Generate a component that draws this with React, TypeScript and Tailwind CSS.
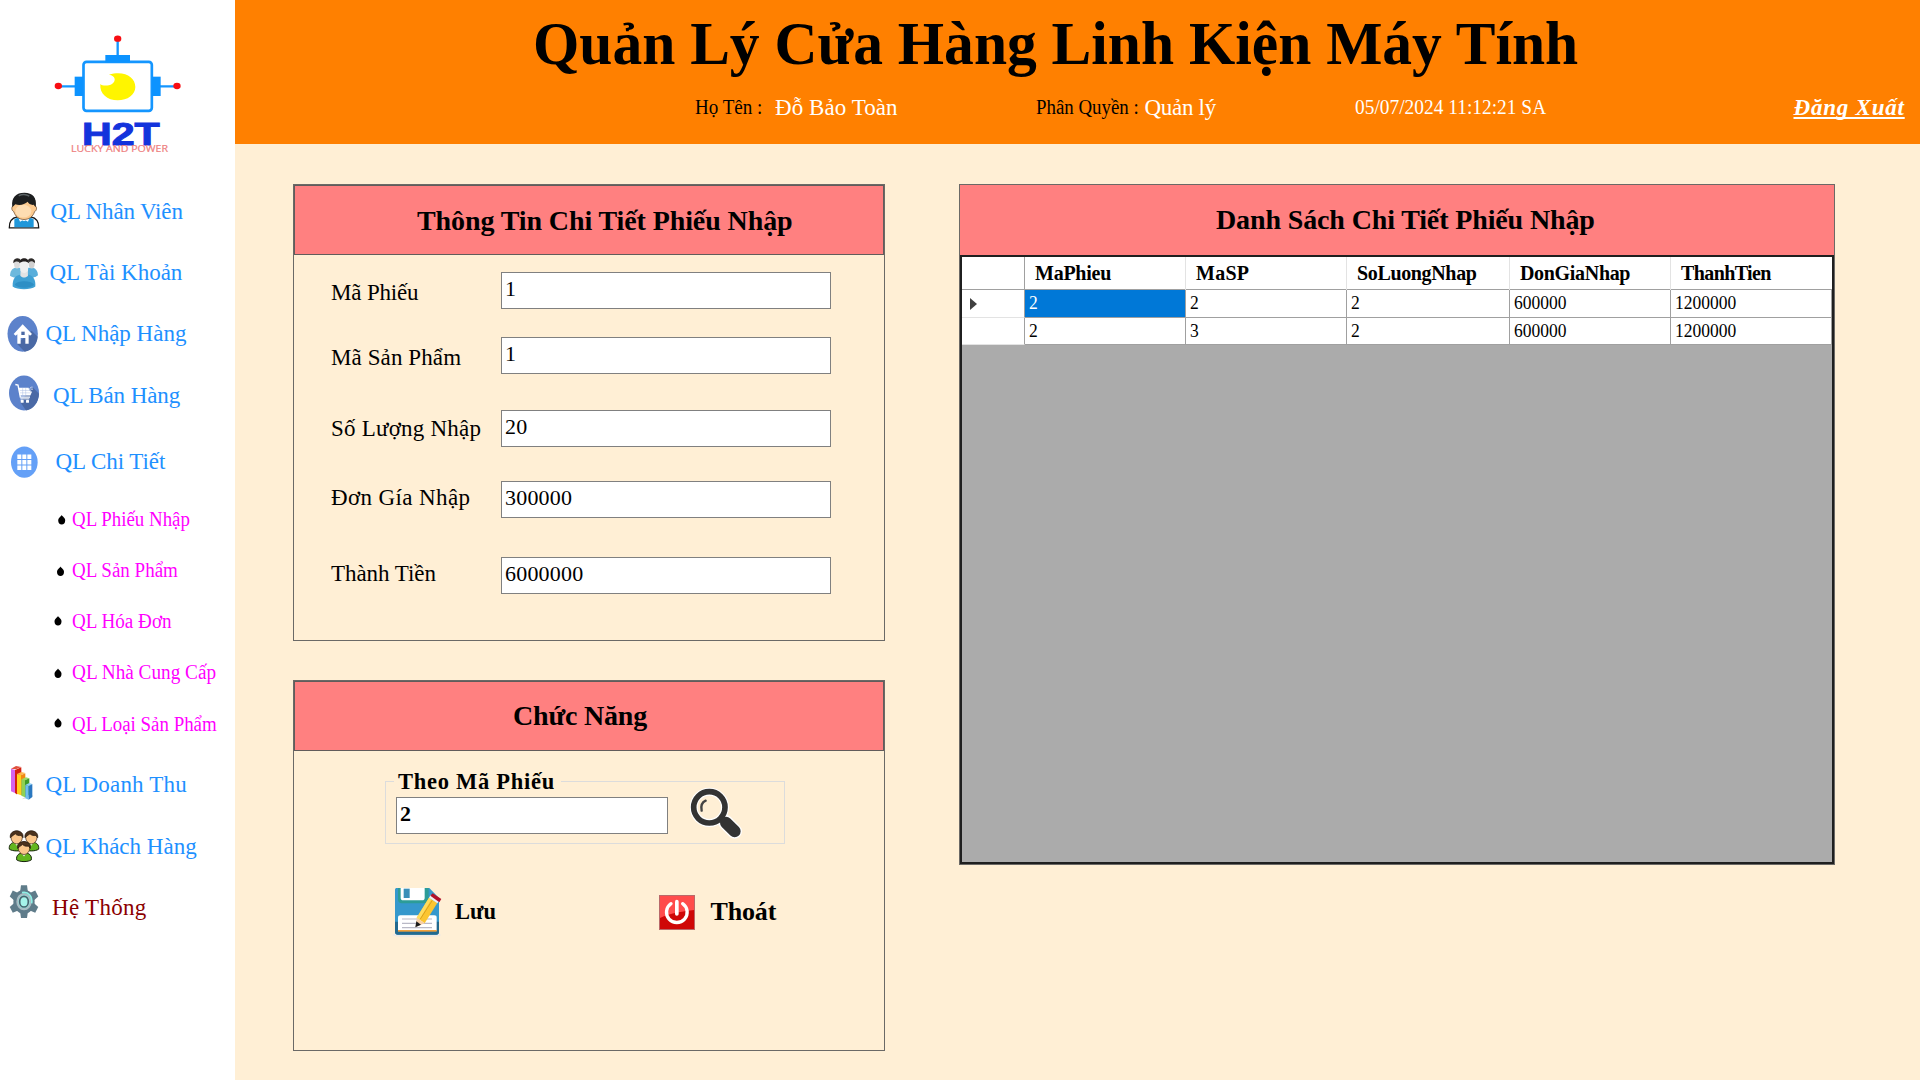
import React from "react";

const SERIF = "font-['Liberation_Serif',serif]";

function Logo() {
  return (
    <svg viewBox="0 0 705 543" className="block h-[181px] w-[235px]">
      <g stroke="#1496ff" strokeWidth="7" fill="none">
        <path d="M353 122V168M182 259H228M480 259H526" />
        <rect x="250.500" y="185.500" width="205" height="147" rx="9" strokeWidth="8" />
      </g>
      <g fill="#0c93ff">
        <rect x="316" y="165" width="74" height="22" />
        <rect x="224" y="230" width="26" height="58" />
        <rect x="456" y="230" width="26" height="58" />
      </g>
      <g fill="#f80d12">
        <ellipse cx="353" cy="116" rx="11" ry="9.500" />
        <ellipse cx="175" cy="258" rx="11" ry="9.500" />
        <ellipse cx="531" cy="258" rx="11" ry="9.500" />
      </g>
      <path d="M327 224C372 210 406 231 406 261C406 284 383 301 353 301C322 301 298 281 301 252C306 258 326 258 336 252C349 243 347 227 327 224Z" fill="#fff500" />
      <text x="246" y="435" textLength="233" lengthAdjust="spacingAndGlyphs" fontFamily="Liberation Sans" fontWeight="700" fontSize="96" fill="#1333dc" stroke="#1333dc" strokeWidth="3">H2T</text>
      <text x="213" y="457" textLength="291" lengthAdjust="spacingAndGlyphs" fontFamily="Open Sans" fontSize="26" fill="#ee8080" stroke="#ee8080" strokeWidth=".6">LUCKY AND POWER</text>
    </svg>
  );
}

function StaffIcon() {
  return (
    <svg viewBox="24 34.500 96 120" className="h-10 w-8 shrink-0 overflow-visible">
      <path d="M28 142C27 122 36 112 52 109H92C108 112 117 122 116 142Z" fill="#fff" stroke="#161616" strokeWidth="4" />
      <path d="M43 140V116L54 111L72 122L90 111L101 116V140Z" fill="#1f97da" />
      <path d="M54 108L60 124L72 117L84 124L90 108Z" fill="#fff" />
      <path d="M39 76C39 50 52 40 73 40C95 40 107 50 106 76C112 80 110 91 104 93C99 108 88 117 72 117C57 117 46 108 41 93C34 90 34 79 39 76Z" fill="#fbc98e" stroke="#5b3a1c" strokeWidth="2" />
      <ellipse cx="70" cy="92" rx="24" ry="19" fill="#ffe3bd" opacity=".75" />
      <path d="M37 80C33 50 49 37 73 37C98 37 111 51 107 80L101 73C92 74 86 70 83 64C74 73 57 76 46 71Z" fill="#1c1e1f" />
      <path d="M56 46C66 41 80 42 88 47" stroke="#5a6264" strokeWidth="4" fill="none" />
    </svg>
  );
}

function AccountIcon() {
  return (
    <svg viewBox="24 217.500 96 120" className="h-10 w-8 shrink-0 overflow-visible">
      <path d="M30 286C31 272 36 264 46 262H62L66 292C54 294 38 292 30 286Z" fill="#6db9dd" />
      <path d="M114 284C113 272 108 264 98 262H84L80 292C92 294 106 290 114 284Z" fill="#58aedb" />
      <path d="M38 318C37 298 44 286 60 283H86C101 287 107 299 106 318C92 329 52 329 38 318Z" fill="#3fa0d3" />
      <path d="M44 312C52 300 92 298 102 312C94 324 54 326 44 312Z" fill="#2383bd" opacity=".6" />
      <ellipse cx="51" cy="250" rx="9" ry="14" fill="#dcdcdc" />
      <ellipse cx="95" cy="250" rx="9" ry="14" fill="#d0d0d0" />
      <path d="M40 244C40 232 60 230 62 240L60 246C52 242 46 242 40 248ZM84 240C86 230 105 232 105 244L104 248C98 241 92 241 86 246Z" fill="#2d2a29" />
      <path d="M62 270H83L84 286C78 293 66 293 61 286Z" fill="#e3e3e3" />
      <path d="M59 244C61 236 84 236 86 244L84 270C79 280 66 280 61 270Z" fill="#efefef" />
      <path d="M58 248C57 228 88 228 87 248C80 241 66 241 58 248Z" fill="#231f1e" />
    </svg>
  );
}

function HomeIcon() {
  return (
    <svg viewBox="24 402 96 120" className="h-10 w-8 shrink-0 overflow-visible">
      <ellipse cx="68" cy="461.500" rx="45.500" ry="53.500" fill="#5c82cb" />
      <path d="M95 452L113 470C112 492 96 512 74 515L51 491Z" fill="#4a69a5" />
      <path d="M68 433L96 462L90 467L86 463V491H76V474H62V491H52V463L47 467L41 462Z" fill="#fff" />
      <rect x="64" y="455" width="10" height="10" fill="#4a69a5" />
    </svg>
  );
}

function CartIcon() {
  return (
    <svg viewBox="24 586.500 96 120" className="h-10 w-8 shrink-0 overflow-visible">
      <ellipse cx="72" cy="637.500" rx="45" ry="52.500" fill="#5c82cb" />
      <path d="M98 620L117 640C116 664 102 686 78 690L60 664Z" fill="#4a69a5" />
      <path d="M46 612L54 614L61 650H90" fill="none" stroke="#fff" strokeWidth="4" />
      <path d="M56 622H86C86 630 92 634 96 634L91 645H60Z" fill="#fff" />
      <path d="M60 630H90M60 637H92M68 623V644M77 623V644" stroke="#9db3de" strokeWidth="1.200" />
      <path d="M98 620C88 618 85 631 94 633M92 626H99" fill="none" stroke="#c4d0ea" strokeWidth="3" />
      <path d="M61 655H88" stroke="#fff" strokeWidth="3" />
      <rect x="62" y="658" width="9" height="9" rx="2" fill="#fff" />
      <rect x="78" y="658" width="9" height="9" rx="2" fill="#fff" />
    </svg>
  );
}

function GridIcon() {
  return (
    <svg viewBox="24 784.500 96 120" className="h-10 w-8 shrink-0 overflow-visible">
      <ellipse cx="73" cy="845" rx="40" ry="47" fill="#64a0f7" />
      <g fill="#fff">
        {[52, 67, 82].map((x) =>
          [822, 838.5, 855].map((y) => <rect key={x + "-" + y} x={x} y={y} width="12" height="13.500" />)
        )}
      </g>
    </svg>
  );
}

function ChartIcon() {
  return (
    <svg viewBox="24 45 96 120" className="h-10 w-8 shrink-0 overflow-visible">
      <path d="M66 148L100 138L88 132Z" fill="#cfcfcf" />
      <path d="M33 56L45 60V129L33 124Z" fill="#d464ee" />
      <path d="M33 56L48 48L64 51L48 58Z" fill="#e0503e" />
      <path d="M45 60L64 52V130L50 133L45 129Z" fill="#d3200f" />
      <path d="M51 72L63 75V136L51 131Z" fill="#ffd21c" />
      <path d="M51 72L64 66L76 69L63 76Z" fill="#ffb84f" />
      <path d="M63 76L76 70V130L63 136Z" fill="#f08a12" />
      <path d="M64 88L75 91V142L64 137Z" fill="#8fd154" />
      <path d="M64 88L78 82L88 85L75 91Z" fill="#9bdc66" />
      <path d="M75 91L88 85V134L75 142Z" fill="#3f9c28" />
      <path d="M76 105L86 108V149L76 145Z" fill="#6fbcf2" />
      <path d="M76 105L88 99L97 102L86 108Z" fill="#8cd0f8" />
      <path d="M86 108L97 102V141L86 149Z" fill="#2a78c0" />
    </svg>
  );
}

function Customer({ x, y }: { x: number; y: number }) {
  return (
    <g transform={`translate(${x} ${y})`}>
      <path d="M-22 46C-24 32 -15 27 -6 25H6C15 27 24 32 22 46C12 53 -12 53 -22 46Z" fill="#63b61f" stroke="#17240c" strokeWidth="3" />
      <path d="M-7 26L0 36L7 26Z" fill="#f4f4ea" />
      <ellipse cx="0" cy="11" rx="17" ry="19" fill="#fac68a" stroke="#3a2413" strokeWidth="2" />
      <path d="M-19 12C-24 -16 24 -16 19 12L14 5C5 6 -1 4 -4 0L-14 7Z" fill="#4b321d" stroke="#1f150c" strokeWidth="2" />
    </g>
  );
}

function CustomersIcon() {
  return (
    <svg viewBox="24 229.500 96 120" className="h-10 w-8 shrink-0 overflow-visible">
      <Customer x={50} y={250} />
      <Customer x={94} y={250} />
      <Customer x={72} y={282} />
    </svg>
  );
}

function GearIcon() {
  return (
    <svg viewBox="24 414 96 120" className="h-10 w-8 shrink-0 overflow-visible">
      <g fill="#5f7c8a">
        {[0, 60, 120].map((a) => (
          <path key={a} d="M-10 -49H10L13 -30V30L10 49H-10L-13 30V-30Z" transform={`translate(72 455) scale(.9 1) rotate(${a})`} />
        ))}
        <ellipse cx="72" cy="455" rx="32" ry="36" />
      </g>
      <ellipse cx="72" cy="455" rx="20" ry="23" fill="#8de8e0" stroke="#a9bcc4" strokeWidth="6" />
      <ellipse cx="72" cy="455" rx="13" ry="16" fill="#a5f3ea" stroke="#48646f" strokeWidth="5" />
      <path d="M66 428C86 424 98 440 95 460" fill="none" stroke="#8ff0e6" strokeWidth="5" />
    </svg>
  );
}

const MAIN_TOP = [
  { label: "QL Nhân Viên", Icon: StaffIcon, row: "h-[61px]", text: "ml-[10.5px] tracking-[-0.15px]" },
  { label: "QL Tài Khoản", Icon: AccountIcon, row: "h-[61px]", text: "ml-[9.5px]" },
  { label: "QL Nhập Hàng", Icon: HomeIcon, row: "h-[62px]", text: "ml-[5.5px]" },
  { label: "QL Bán Hàng", Icon: CartIcon, row: "h-[61px]", text: "ml-[13px] tracking-[-0.1px]" },
  { label: "QL Chi Tiết", Icon: GridIcon, row: "h-[71px]", text: "ml-[15.5px] tracking-[-0.05px]" },
];

const SUB = [
  { label: "QL Phiếu Nhập", row: "h-[43px]", text: "scale-x-[0.945]", cx: 61.7, cy: 9 },
  { label: "QL Sản Phẩm", row: "h-[59px]", text: "scale-x-[0.95]", cx: 60.5, cy: 9.5 },
  { label: "QL Hóa Đơn", row: "h-[44px]", text: "scale-x-[0.955]", cx: 58, cy: 8 },
  { label: "QL Nhà Cung Cấp", row: "h-[58px]", text: "scale-x-[0.962]", cx: 58, cy: 9.5 },
  { label: "QL Loại Sản Phẩm", row: "h-[45px]", text: "scale-x-[0.945]", cx: 58, cy: 7 },
];

const MAIN_BOTTOM = [
  { label: "QL Doanh Thu", Icon: ChartIcon, row: "h-[78px] text-[#1e90ff]", text: "ml-[5.5px] tracking-[0.17px]" },
  { label: "QL Khách Hàng", Icon: CustomersIcon, row: "h-[45px] text-[#1e90ff]", text: "ml-[5.5px]" },
  { label: "Hệ Thống", Icon: GearIcon, row: "h-[78px] text-[#8b0000]", text: "ml-[12px] tracking-[0.3px]" },
];

function Sidebar() {
  return (
    <aside className="w-[235px] shrink-0 bg-white">
      <Logo />
      <nav className="text-[23px] leading-[30px] whitespace-nowrap">
        {MAIN_TOP.map(({ label, Icon, row, text }) => (
          <div key={label} className={`flex items-center pl-2 text-[#1e90ff] ${row}`}>
            <Icon />
            <span className={text}>{label}</span>
          </div>
        ))}
        {SUB.map(({ label, row, text, cx, cy }) => (
          <div key={label} className={`flex items-center pl-[52px] text-[20px] text-[#ff00ff] ${row}`}>
            <svg viewBox="52 0 16 16" className="h-4 w-4 shrink-0">
              <path d="M0 -5C1 -3 3.500 -2.500 3.500 0.500C3.500 3 2 4.500 0 4.500S-3.500 3 -3.500 0.500C-3.500 -2.500 -1 -3 0 -5Z" transform={`translate(${cx} ${cy})`} fill="#000" />
            </svg>
            <span className={`ml-[3.5px] origin-left ${text}`}>{label}</span>
          </div>
        ))}
        {MAIN_BOTTOM.map(({ label, Icon, row, text }) => (
          <div key={label} className={`flex items-center pl-2 ${row}`}>
            <Icon />
            <span className={text}>{label}</span>
          </div>
        ))}
      </nav>
    </aside>
  );
}

function Header() {
  return (
    <header className="h-[144px] bg-[#ff8000] pt-[7px] whitespace-nowrap">
      <h1 className="h-[72px] origin-left translate-x-[298px] scale-x-[0.96] text-[62px] leading-[73px] font-bold">
        Quản Lý Cửa Hàng Linh Kiện Máy Tính
      </h1>
      <div className="flex h-[57px] items-center pl-[460px] text-[20px] leading-[30px] text-white">
        <span className="w-[80px] shrink-0 origin-left scale-x-[0.952] pb-[2px] text-black">Họ Tên :</span>
        <span className="w-[261px] shrink-0 text-[23px] tracking-[0.06px]">Đỗ Bảo Toàn</span>
        <span className="w-[108.5px] shrink-0 origin-left scale-x-[0.943] pb-[2px] text-black">Phân Quyền :</span>
        <span className="w-[210px] shrink-0 text-[23px] tracking-[-0.3px]">Quản lý</span>
        <span className="w-[439px] shrink-0 origin-left scale-x-[0.97] pb-[2px]">05/07/2024 11:12:21 SA</span>
        <a className="text-[23px] font-bold italic tracking-[0.78px] underline decoration-2 underline-offset-2 [text-decoration-skip-ink:none]">
          Đăng Xuất
        </a>
      </div>
    </header>
  );
}

const FIELDS = [
  { label: "Mã Phiếu", value: "1", row: "mt-[17px]", text: "mt-[2px] tracking-[-0.17px]" },
  { label: "Mã Sản Phẩm", value: "1", row: "mt-[28px]", text: "mt-[2px] tracking-[0.1px]" },
  { label: "Số Lượng Nhập", value: "20", row: "mt-[36px]", text: "tracking-[0.22px]" },
  { label: "Đơn Gía Nhập", value: "300000", row: "mt-[34px]", text: "-mt-[2px] tracking-[0.38px]" },
  { label: "Thành Tiền", value: "6000000", row: "mt-[39px]", text: "-mt-[2px] tracking-[-0.05px]" },
];

function DetailPanel() {
  return (
    <section className="h-[457px] border border-[#6b6966]">
      <div className="flex h-[70px] items-center border border-[#625c5b] bg-[#ff8080] pt-[2px] pl-[122px]">
        <h2 className="text-[28px] leading-[36px] font-bold tracking-[-0.1px] whitespace-nowrap">Thông Tin Chi Tiết Phiếu Nhập</h2>
      </div>
      {FIELDS.map((f) => (
        <div key={f.label} className={`flex h-[37px] items-start pl-[37px] ${f.row}`}>
          <label className={`w-[170px] shrink-0 text-[23px] leading-[37px] whitespace-nowrap ${f.text}`}>{f.label}</label>
          <div className="h-[37px] w-[330px] border border-[#808080] bg-white pl-[3px] text-[22px] leading-[31px] tracking-[0.2px]">{f.value}</div>
        </div>
      ))}
    </section>
  );
}

function SearchIcon() {
  return (
    <svg viewBox="930 51 156 156" className="-mt-[10px] ml-[22px] h-[52px] w-[52px] shrink-0">
      <g stroke="#fff" fill="none" strokeLinecap="round">
        <ellipse cx="988" cy="112" rx="47" ry="47" strokeWidth="24" />
        <path d="M1036 156L1064 184" strokeWidth="44" />
      </g>
      <ellipse cx="988" cy="112" rx="46" ry="46" fill="#ffefd5" stroke="#fff" strokeWidth="22" />
      <ellipse cx="988" cy="112" rx="47" ry="47" fill="none" stroke="#333" strokeWidth="17" />
      <path d="M1022 142L1036 156" stroke="#333" strokeWidth="16" />
      <path d="M1038 158L1064 184" stroke="#333" strokeWidth="36" strokeLinecap="round" />
      <path d="M965 122C962 108 966 97 977 92" fill="none" stroke="#444" strokeWidth="7" strokeLinecap="round" />
    </svg>
  );
}

function SaveIcon() {
  return (
    <svg viewBox="36 348 150 156" className="h-[52px] w-[50px] shrink-0">
      <ellipse cx="110" cy="495" rx="73" ry="7" fill="#efe9e4" />
      <path d="M45 360C45 356 47 354 51 354H148L177 384V486C177 491 174 494 169 494H53C48 494 45 491 45 486Z" fill="#3598cc" />
      <path d="M45 455V486C45 491 48 494 53 494H169C174 494 177 491 177 486V455Z" fill="#23698f" />
      <path d="M54 354H146V388C146 396 142 400 134 400H66C58 400 54 396 54 388Z" fill="#2c9c97" />
      <path d="M62 354H134V383C134 389 131 391 127 391H69C65 391 62 389 62 383Z" fill="#fff" />
      <rect x="71" y="356" width="18" height="28" fill="#3a8fb8" />
      <path d="M54 443C54 438 57 436 61 436H163C168 436 170 438 170 443V482H54Z" fill="#fff" />
      <rect x="54" y="480" width="116" height="5" fill="#f2a13c" />
      <path d="M66 447H156M66 460H156M66 473H156" stroke="#b9b9c6" strokeWidth="3.500" />
      <path d="M110 443L147 383L172 399L134 460Z" fill="#fbc531" />
      <path d="M110 443L147 383L154 388L118 449Z" fill="#ffdc5f" />
      <path d="M121 447L157 391" stroke="#d39a1b" strokeWidth="2.500" />
      <path d="M110 443L134 460L107 471Z" fill="#f6cfa6" />
      <path d="M109 454L106 472L123 464Z" fill="#1b1b1b" />
      <path d="M147 383L152 375L178 392L172 400Z" fill="#f1f1f1" />
      <path d="M151 377L158 370L184 387L178 397Z" fill="#b3122a" />
    </svg>
  );
}

function PowerIcon() {
  return (
    <svg viewBox="837 375 108 105" className="h-[35px] w-[36px] shrink-0">
      <rect x="838.500" y="376.500" width="105" height="102" fill="#cf0707" stroke="#b9696a" strokeWidth="3" />
      <path d="M840 378H942V420C915 424 870 428 840 444Z" fill="#ff4c4c" />
      <path d="M873 401A31 31 0 1 0 908 401" fill="none" stroke="#fff" strokeWidth="10" strokeLinecap="round" />
      <path d="M890.500 395V432" stroke="#fff" strokeWidth="11" strokeLinecap="round" />
    </svg>
  );
}

function FunctionPanel() {
  return (
    <section className="mt-[39px] h-[371px] border border-[#6b6966]">
      <div className="flex h-[70px] items-center border border-[#625c5b] bg-[#ff8080] pl-[218px]">
        <h2 className="text-[28px] leading-[36px] font-bold tracking-[-0.2px] whitespace-nowrap">Chức Năng</h2>
      </div>
      <fieldset className="mt-[15px] ml-[91px] h-[78px] w-[400px] border border-[#dcdcdc]">
        <legend className="ml-2 h-[30px] w-[167px] pl-1 text-[22.5px] leading-[31px] font-bold tracking-[0.72px] whitespace-nowrap">
          Theo Mã Phiếu
        </legend>
        <div className="flex items-start pt-px pl-[10px]">
          <div className="h-[37px] w-[272px] border border-[#808080] bg-white pl-[3px] text-[22px] leading-[31px] font-bold">2</div>
          <SearchIcon />
        </div>
      </fieldset>
      <div className="mt-[42px] flex h-[52px] items-center pl-[98px] text-[22.5px] leading-[30px] font-bold whitespace-nowrap">
        <SaveIcon />
        <span className="ml-[13px] w-[204px] pb-px">Lưu</span>
        <PowerIcon />
        <span className="ml-[15.5px] text-[26px] tracking-[-0.15px]">Thoát</span>
      </div>
    </section>
  );
}

const COLUMNS = [
  { name: "MaPhieu", cls: "tracking-[-0.25px]" },
  { name: "MaSP", cls: "tracking-[0.27px]" },
  { name: "SoLuongNhap", cls: "tracking-[-0.35px]" },
  { name: "DonGiaNhap", cls: "tracking-[-0.32px]" },
  { name: "ThanhTien", cls: "tracking-[-0.6px]" },
];

const ROWS = [
  { height: "h-[28px]", cells: ["2", "2", "2", "600000", "1200000"] },
  { height: "h-[27px]", cells: ["2", "3", "2", "600000", "1200000"] },
];

function DataGrid() {
  return (
    <div className="flex-1 border-2 border-[#1f1f1f] bg-[#ababab]">
      <div className="grid h-[33px] grid-cols-[63px_161px_161px_163px_161px_161px] border-b border-[#a0a0a0] bg-white text-[20px] leading-[33px] font-bold">
        <div className="border-r border-[#a0a0a0]" />
        {COLUMNS.map((c) => (
          <div key={c.name} className={`border-r border-[#e3e3e3] pl-[10px] last:border-r-0 ${c.cls}`}>{c.name}</div>
        ))}
      </div>
      {ROWS.map((row, r) => (
        <div key={r} className={`grid grid-cols-[63px_161px_161px_163px_161px_161px] bg-white text-[18.5px] leading-[26px] ${row.height}`}>
          <div className="flex items-center border-r border-b border-r-[#a0a0a0] border-b-[#e3e3e3] pl-2">
            {r === 0 && (
              <svg viewBox="0 0 7 12" className="mt-px h-3 w-[7px]">
                <path d="M0 0L7 6L0 12Z" fill="#404040" />
              </svg>
            )}
          </div>
          {row.cells.map((v, c) => (
            <div key={c} className={`border-r border-b border-[#a0a0a0] pl-[3.5px] ${r === 0 && c === 0 ? "bg-[#0078d7] text-white" : ""}`}>
              <span className="inline-block origin-left scale-x-[0.945]">{v}</span>
            </div>
          ))}
        </div>
      ))}
    </div>
  );
}

function ListPanel() {
  return (
    <section className="ml-[74px] flex h-[681px] w-[876px] flex-col border border-[#6b6966]">
      <div className="flex h-[70px] shrink-0 items-center bg-[#ff8080] pl-[256px]">
        <h2 className="text-[28px] leading-[36px] font-bold tracking-[-0.13px] whitespace-nowrap">Danh Sách Chi Tiết Phiếu Nhập</h2>
      </div>
      <DataGrid />
    </section>
  );
}

export default function App() {
  return (
    <div className={`flex h-[1080px] w-[1920px] overflow-hidden bg-[#ffefd5] text-black ${SERIF}`}>
      <Sidebar />
      <div className="w-[1685px]">
        <Header />
        <main className="flex items-start pt-[40px] pl-[58px]">
          <div className="w-[592px]">
            <DetailPanel />
            <FunctionPanel />
          </div>
          <ListPanel />
        </main>
      </div>
    </div>
  );
}
